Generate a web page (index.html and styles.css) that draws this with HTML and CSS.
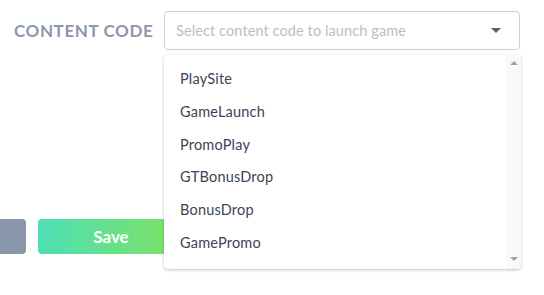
FILE: index.html
```html
<!DOCTYPE html>
<html lang="en">
<head>
  <meta charset="UTF-8">
  <meta name="viewport" content="width=device-width, initial-scale=1.0">
  <title>Content Code</title>
  <link rel="stylesheet" href="styles.css">
</head>
<body>
  <div class="form">
    <div class="field">
      <label class="field-label">CONTENT CODE</label>
      <div class="select-wrap">
        <div class="select">
          <span class="placeholder">Select content code to launch game</span>
          <span class="caret"></span>
        </div>
        <div class="dropdown">
          <ul class="options">
            <li>PlaySite</li>
            <li>GameLaunch</li>
            <li>PromoPlay</li>
            <li>GTBonusDrop</li>
            <li>BonusDrop</li>
            <li>GamePromo</li>
          </ul>
          <div class="scrollbar">
            <span class="arrow up"></span>
            <span class="arrow down"></span>
          </div>
        </div>
      </div>
    </div>
    <div class="actions">
      <button class="btn btn-cancel"></button>
      <button class="btn btn-save">Save</button>
    </div>
  </div>
</body>
</html>
```

FILE: styles.css
```css
html, body {
  height: 100%;
}
body {
  margin: 0;
  background: #fff;
  font-family: Lato, "Open Sans", sans-serif;
}
.form {
  padding-top: 11px;
  min-height: 100%;
  box-sizing: border-box;
}
.field {
  display: flex;
  align-items: center;
  gap: 11px;
  padding-left: 14px;
}
.field-label {
  font-size: 17px;
  font-weight: 700;
  color: #8c97a9;
  letter-spacing: 0.6px;
  width: 139px;
  white-space: nowrap;
}
.select-wrap {
  position: relative;
}
.select {
  width: 356px;
  height: 39px;
  box-sizing: border-box;
  border: 1px solid #cbcfd9;
  border-radius: 4px;
  display: flex;
  align-items: center;
  justify-content: space-between;
  padding: 0 18px 0 11px;
}
.placeholder {
  font-size: 14.5px;
  color: #b9bdcb;
  letter-spacing: 0.1px;
}
.caret {
  width: 0;
  height: 0;
  border-left: 5px solid transparent;
  border-right: 5px solid transparent;
  border-top: 5px solid #5b6172;
}
.dropdown {
  position: absolute;
  top: 44px;
  left: 0;
  width: 357px;
  height: 214px;
  background: #fff;
  border-radius: 4px;
  box-shadow: 0 1px 3px rgba(0, 0, 0, 0.25);
  display: flex;
  overflow: hidden;
}
.options {
  list-style: none;
  margin: 0;
  padding: 8px 0 0 0;
  flex: 1;
}
.options li {
  height: 32.8px;
  line-height: 32.8px;
  padding-left: 16px;
  font-size: 14.5px;
  letter-spacing: 0.2px;
  color: #3d4357;
}
.scrollbar {
  width: 15px;
  background: #f9f9f9;
  display: flex;
  flex-direction: column;
  justify-content: space-between;
  align-items: center;
  padding: 6px 0 8px;
}
.arrow {
  width: 0;
  height: 0;
  border-left: 4px solid transparent;
  border-right: 4px solid transparent;
}
.arrow.up {
  border-bottom: 4px solid #a3a3a3;
}
.arrow.down {
  border-top: 4px solid #a3a3a3;
}
.actions {
  display: flex;
  gap: 12px;
  margin-top: 169px;
}
.btn {
  height: 35px;
  border: none;
  border-radius: 4px;
  font-family: inherit;
  cursor: pointer;
}
.btn-cancel {
  width: 26px;
  background: #8a97ab;
  border-radius: 0 4px 4px 0;
}
.btn-save {
  width: 146px;
  background: linear-gradient(90deg, #4ddfb6, #80e260);
  color: #fff;
  font-size: 17px;
  font-weight: 700;
}
```
